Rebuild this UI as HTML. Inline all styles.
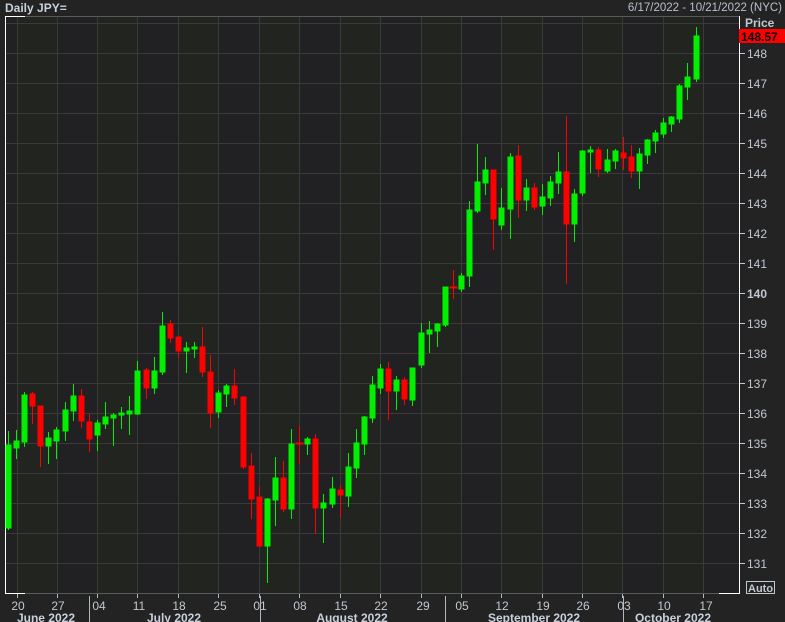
<!DOCTYPE html>
<html><head><meta charset="utf-8"><style>
html,body{margin:0;padding:0;background:#232323;width:785px;height:622px;overflow:hidden}
svg{display:block}
text{font-family:"Liberation Sans",sans-serif}
</style></head><body>
<svg width="785" height="622" viewBox="0 0 785 622" xmlns="http://www.w3.org/2000/svg">
<rect width="785" height="622" fill="#232323"/>
<rect x="5" y="16" width="734" height="578" fill="#212023"/>
<g fill="#222420">
<rect x="17" y="16" width="40" height="578"/><rect x="97" y="16" width="40" height="578"/><rect x="178" y="16" width="40" height="578"/><rect x="259" y="16" width="40" height="578"/><rect x="340" y="16" width="40" height="578"/><rect x="421" y="16" width="40" height="578"/><rect x="501" y="16" width="41" height="578"/><rect x="582" y="16" width="40" height="578"/><rect x="663" y="16" width="40" height="578"/>
</g>
<g stroke="#3a3a3a" stroke-width="1">
<path d="M17.5 16V594M57.5 16V594M97.5 16V594M137.5 16V594M178.5 16V594M218.5 16V594M259.5 16V594M299.5 16V594M340.5 16V594M380.5 16V594M421.5 16V594M461.5 16V594M501.5 16V594M542.5 16V594M582.5 16V594M622.5 16V594M663.5 16V594M703.5 16V594"/>
<path d="M5 23.5H739M5 53.5H739M5 83.5H739M5 113.5H739M5 143.5H739M5 173.5H739M5 203.5H739M5 233.5H739M5 263.5H739M5 293.5H739M5 323.5H739M5 353.5H739M5 383.5H739M5 413.5H739M5 443.5H739M5 473.5H739M5 503.5H739M5 533.5H739M5 563.5H739"/>
</g>
<!-- frame -->
<path d="M25 16.5H739M5 593.5H739" stroke="#5a5a5a"/>
<path d="M5.5 16V594M739.5 16V594M5 16.5H25M5 593.5H25M719 593.5H740" stroke="#ffffff"/>
<!-- candles green -->
<g stroke="#00f000" fill="#00f000">
<path d="M8.5 431V530M16.5 430V459M24.5 392V447M48.5 432V464M56.5 427V459M65.5 402V441M73.5 384V421M97.5 420V451M105.5 402V429M113.5 413V446M121.5 407V429M129.5 396V435M137.5 361V415M154.5 357V394M162.5 312V375M186.5 342V373M194.5 342V358M218.5 390V418M226.5 384V407M267.5 498V583M275.5 457V526M291.5 429V519M307.5 437V455M323.5 494V543M332.5 477V508M348.5 453V507M356.5 429V478M364.5 416V455M372.5 376V423M380.5 364V394M396.5 376V410M412.5 368V406M421.5 323V368M429.5 321V353M437.5 323V347M445.5 287V327M461.5 273V292M469.5 201V287M477.5 144V213M485.5 157V195M501.5 188V230M510.5 153V239M526.5 179V211M542.5 184V215M550.5 176V206M558.5 152V194M574.5 189V242M582.5 150V196M590.5 146V173M607.5 149V173M615.5 149V169M639.5 148V189M647.5 139V164M655.5 130V153M663.5 118V138M671.5 116V132M679.5 84V123M687.5 63V100M696.5 27V82" fill="none"/>
<rect x="6" y="445" width="5" height="83"/><rect x="14" y="441" width="5" height="7"/><rect x="22" y="395" width="5" height="47"/><rect x="46" y="438" width="5" height="8"/><rect x="54" y="430" width="5" height="11"/><rect x="63" y="410" width="5" height="21"/><rect x="71" y="396" width="5" height="15"/><rect x="95" y="423" width="5" height="12"/><rect x="103" y="417" width="5" height="7"/><rect x="111" y="415" width="5" height="3"/><rect x="119" y="413" width="5" height="2"/><rect x="127" y="411" width="5" height="3"/><rect x="135" y="371" width="5" height="43"/><rect x="152" y="371" width="5" height="17"/><rect x="160" y="326" width="5" height="46"/><rect x="184" y="348" width="5" height="3"/><rect x="192" y="347" width="5" height="2"/><rect x="216" y="393" width="5" height="19"/><rect x="224" y="386" width="5" height="8"/><rect x="265" y="499" width="5" height="47"/><rect x="273" y="478" width="5" height="22"/><rect x="289" y="444" width="5" height="65"/><rect x="305" y="439" width="5" height="5"/><rect x="321" y="503" width="5" height="5"/><rect x="330" y="489" width="5" height="15"/><rect x="346" y="467" width="5" height="29"/><rect x="354" y="443" width="5" height="25"/><rect x="362" y="417" width="5" height="27"/><rect x="370" y="385" width="5" height="33"/><rect x="378" y="369" width="5" height="19"/><rect x="394" y="380" width="5" height="11"/><rect x="410" y="368" width="5" height="32"/><rect x="419" y="333" width="5" height="32"/><rect x="427" y="330" width="5" height="4"/><rect x="435" y="324" width="5" height="7"/><rect x="443" y="287" width="5" height="38"/><rect x="459" y="276" width="5" height="13"/><rect x="467" y="210" width="5" height="66"/><rect x="475" y="182" width="5" height="29"/><rect x="483" y="170" width="5" height="13"/><rect x="499" y="208" width="5" height="17"/><rect x="508" y="157" width="5" height="52"/><rect x="524" y="188" width="5" height="12"/><rect x="540" y="197" width="5" height="9"/><rect x="548" y="182" width="5" height="16"/><rect x="556" y="172" width="5" height="11"/><rect x="572" y="194" width="5" height="30"/><rect x="580" y="151" width="5" height="42"/><rect x="588" y="150" width="5" height="2"/><rect x="605" y="160" width="5" height="11"/><rect x="613" y="151" width="5" height="10"/><rect x="637" y="154" width="5" height="17"/><rect x="645" y="140" width="5" height="15"/><rect x="653" y="133" width="5" height="8"/><rect x="661" y="123" width="5" height="11"/><rect x="669" y="117" width="5" height="7"/><rect x="677" y="86" width="5" height="33"/><rect x="685" y="77" width="5" height="10"/><rect x="694" y="36" width="5" height="43"/>
</g>
<!-- candles red -->
<g stroke="#ff0000" fill="#ff0000">
<path d="M32.5 392V424M40.5 406V467M81.5 389V428M89.5 414V452M146.5 368V399M170.5 320V343M178.5 336V358M202.5 327V377M210.5 355V428M234.5 369V405M243.5 396V469M251.5 453V519M259.5 487V547M283.5 461V512M299.5 426V464M315.5 434V534M340.5 485V518M388.5 362V420M404.5 377V405M453.5 270V299M493.5 170V250M518.5 145V218M534.5 183V210M566.5 116V284M598.5 147V177M623.5 137V170M631.5 145V178" fill="none"/>
<rect x="30" y="394" width="5" height="12"/><rect x="38" y="406" width="5" height="40"/><rect x="79" y="396" width="5" height="25"/><rect x="87" y="422" width="5" height="17"/><rect x="144" y="370" width="5" height="18"/><rect x="168" y="324" width="5" height="14"/><rect x="176" y="337" width="5" height="14"/><rect x="200" y="347" width="5" height="25"/><rect x="208" y="372" width="5" height="41"/><rect x="232" y="386" width="5" height="12"/><rect x="241" y="397" width="5" height="70"/><rect x="249" y="466" width="5" height="33"/><rect x="257" y="497" width="5" height="49"/><rect x="281" y="478" width="5" height="31"/><rect x="296" y="443" width="7" height="1"/><rect x="313" y="439" width="5" height="69"/><rect x="338" y="490" width="5" height="5"/><rect x="386" y="369" width="5" height="22"/><rect x="402" y="380" width="5" height="19"/><rect x="450" y="287" width="7" height="1"/><rect x="491" y="170" width="5" height="49"/><rect x="516" y="156" width="5" height="44"/><rect x="532" y="188" width="5" height="19"/><rect x="564" y="172" width="5" height="52"/><rect x="596" y="150" width="5" height="19"/><rect x="621" y="153" width="5" height="5"/><rect x="629" y="157" width="5" height="14"/>
</g>
<!-- y axis -->
<g stroke="#c0c8d0"><path d="M740 53.5h5M740 83.5h5M740 113.5h5M740 143.5h5M740 173.5h5M740 203.5h5M740 233.5h5M740 263.5h5M740 293.5h5M740 323.5h5M740 353.5h5M740 383.5h5M740 413.5h5M740 443.5h5M740 473.5h5M740 503.5h5M740 533.5h5M740 563.5h5"/></g>
<g fill="#c0c8d0" font-size="12">
<text x="747" y="58">148</text><text x="747" y="88">147</text><text x="747" y="118">146</text><text x="747" y="148">145</text><text x="747" y="178">144</text><text x="747" y="208">143</text><text x="747" y="238">142</text><text x="747" y="268">141</text><text x="747" y="298" font-weight="bold">140</text><text x="747" y="328">139</text><text x="747" y="358">138</text><text x="747" y="388">137</text><text x="747" y="418">136</text><text x="747" y="448">135</text><text x="747" y="478">134</text><text x="747" y="508">133</text><text x="747" y="538">132</text><text x="747" y="568">131</text>
</g>
<text x="745" y="27" font-size="12" font-weight="bold" fill="#c0c8d0">Price</text>
<rect x="739" y="29" width="46" height="14" fill="#ff0000"/>
<text x="741" y="41" font-size="12" font-weight="bold" fill="#000">148.57</text>
<rect x="746.5" y="581.5" width="28" height="12" fill="none" stroke="#c0c8d0"/>
<text x="748" y="592" font-size="11" font-weight="bold" fill="#c0c8d0">Auto</text>
<!-- title -->
<text x="5" y="12" font-size="12" font-weight="bold" fill="#c8d0dc">Daily JPY=</text>
<text x="782" y="11" font-size="11.5" fill="#b8c0cc" text-anchor="end">6/17/2022 - 10/21/2022 (NYC)</text>
<!-- x axis -->
<g stroke="#b0b8c0"><path d="M17.5 594v4M57.5 594v4M97.5 594v4M137.5 594v4M178.5 594v4M218.5 594v4M259.5 594v4M299.5 594v4M340.5 594v4M380.5 594v4M421.5 594v4M461.5 594v4M501.5 594v4M542.5 594v4M582.5 594v4M622.5 594v4M663.5 594v4M703.5 594v4M89.5 596v26M260.5 596v26M445.5 596v26M623.5 596v26"/></g>
<g fill="#c0c8d0" font-size="12" text-anchor="middle">
<text x="18" y="610">20</text><text x="58" y="610">27</text><text x="99" y="610">04</text><text x="139" y="610">11</text><text x="179" y="610">18</text><text x="220" y="610">25</text><text x="260" y="610">01</text><text x="300" y="610">08</text><text x="341" y="610">15</text><text x="381" y="610">22</text><text x="423" y="610">29</text><text x="462" y="610">05</text><text x="502" y="610">12</text><text x="543" y="610">19</text><text x="583" y="610">26</text><text x="624" y="610">03</text><text x="664" y="610">10</text><text x="706" y="610">17</text>
</g>
<g fill="#c8d0dc" font-size="12" font-weight="bold" text-anchor="middle">
<text x="46" y="622">June 2022</text><text x="174" y="622">July 2022</text><text x="352" y="622">August 2022</text><text x="534" y="622">September 2022</text><text x="673" y="622">October 2022</text>
</g>
</svg>
</body></html>
